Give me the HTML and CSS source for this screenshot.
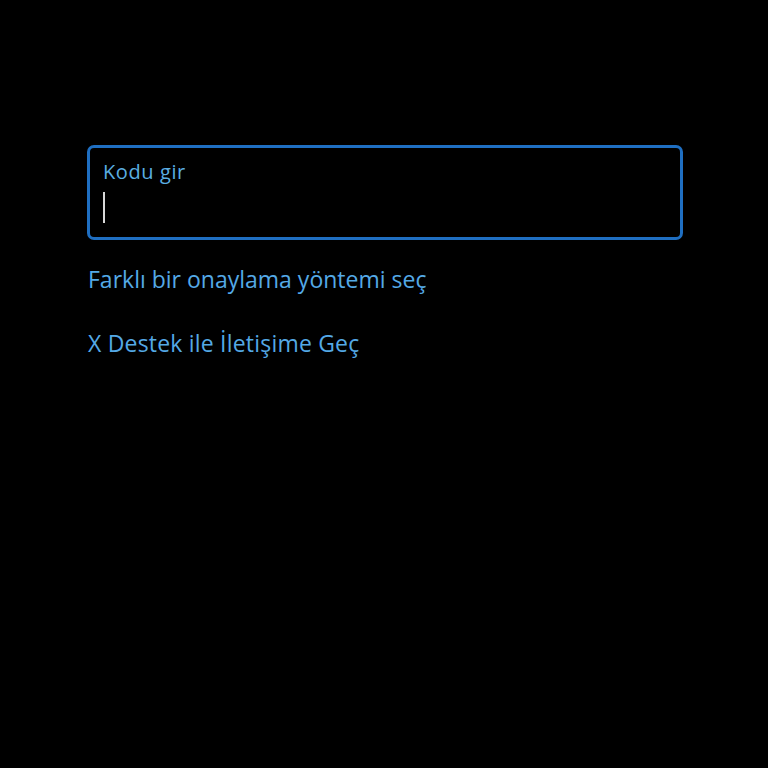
FILE: index.html
```html
<!DOCTYPE html>
<html lang="tr">
<head>
<meta charset="utf-8">
<link rel="stylesheet" href="styles.css">
</head>
<body>
<main class="page">
  <div class="field">
    <div class="label">Kodu gir</div>
    <div class="input"><span class="caret"></span></div>
  </div>
  <a class="link first">Farklı bir onaylama yöntemi seç</a>
  <a class="link second">X Destek ile İletişime Geç</a>
</main>
</body>
</html>
```
FILE: styles.css
```css
html, body {
  margin: 0;
  padding: 0;
  background: #000;
  width: 768px;
  height: 768px;
  overflow: hidden;
}
.page {
  display: flex;
  flex-direction: column;
  align-items: flex-start;
  padding: 145px 86px 0 87px;
  font-family: "Open Sans", "Liberation Sans", sans-serif;
}
.field {
  box-sizing: border-box;
  width: 596px;
  height: 95px;
  border: 3px solid #1f6fc2;
  border-radius: 7px;
  padding: 11px 13px 0;
}
.label {
  color: #5aaee2;
  font-size: 20px;
  line-height: 26px;
  letter-spacing: 0.6px;
}
.input {
  height: 33px;
  padding-top: 7px;
}
.caret {
  display: block;
  width: 1.5px;
  height: 31px;
  background: #d8d8d8;
}
.link {
  color: #54a9e6;
  font-size: 23px;
  line-height: 28px;
  text-decoration: none;
  padding-left: 1px;
}
.first {
  margin-top: 25px;
}
.second {
  margin-top: 36px;
  letter-spacing: 0.2px;
}
```
